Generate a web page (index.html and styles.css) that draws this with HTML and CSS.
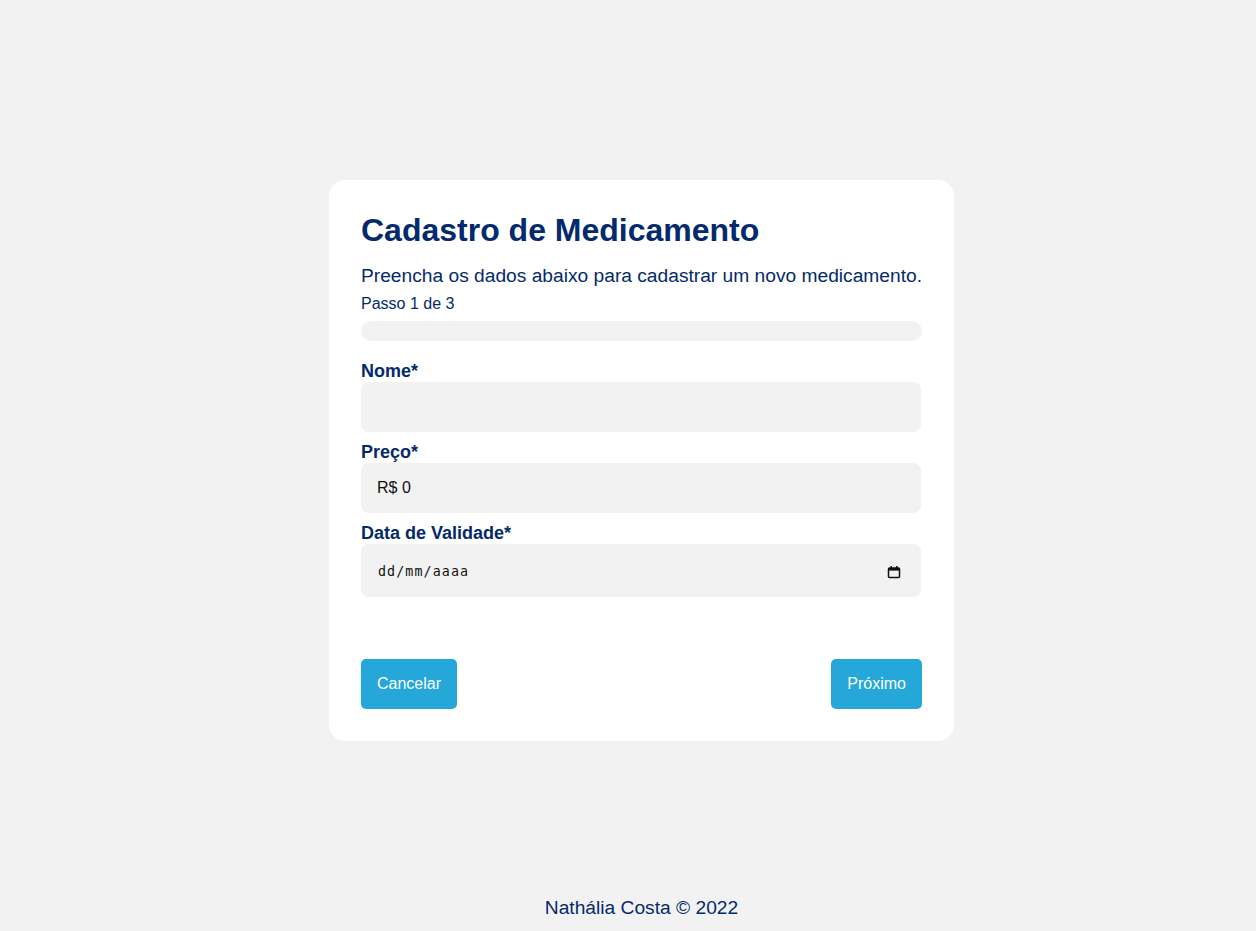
FILE: index.html
```html
<!DOCTYPE html>
<html lang="pt-BR">
<head>
<meta charset="utf-8">
<title>Cadastro de Medicamento</title>
<link rel="stylesheet" href="styles.css">
</head>
<body>
<main class="page">
  <section class="card">
    <h1 class="title">Cadastro de Medicamento</h1>
    <p class="subtitle">Preencha os dados abaixo para cadastrar um novo medicamento.</p>
    <p class="step">Passo 1 de 3</p>
    <div class="progress"><div class="progress-fill" style="width:0%"></div></div>
    <form class="form">
      <label class="label" for="nome">Nome*</label>
      <input class="field" id="nome" type="text">
      <label class="label" for="preco">Preço*</label>
      <input class="field" id="preco" type="text" value="R$ 0">
      <label class="label">Data de Validade*</label>
      <div class="field date-field">
        <span class="date-text">dd/mm/aaaa</span>
        <svg class="cal" width="14" height="14" viewBox="0 0 14 14" aria-hidden="true">
          <rect x="1.5" y="3" width="11" height="9.5" rx="1" fill="none" stroke="#111" stroke-width="1.5"/>
          <rect x="1.5" y="3" width="11" height="2.6" fill="#111"/>
          <rect x="3.5" y="1" width="1.5" height="3" fill="#111"/>
          <rect x="9" y="1" width="1.5" height="3" fill="#111"/>
        </svg>
      </div>
      <div class="actions">
        <button type="button" class="btn">Cancelar</button>
        <button type="button" class="btn">Próximo</button>
      </div>
    </form>
  </section>
</main>
<footer class="footer">Nathália Costa © 2022</footer>
</body>
</html>
```
FILE: styles.css
```css
* { box-sizing: border-box; }
html, body { margin: 0; padding: 0; }
body {
  background: #f2f2f2;
  font-family: "Liberation Sans", Arial, sans-serif;
  color: #042a6b;
  min-height: 100vh;
  display: flex;
  flex-direction: column;
  padding-left: 27px;
}
.page {
  flex: 1;
  display: flex;
  justify-content: center;
  align-items: flex-start;
  padding-top: 180px;
}
.card {
  width: 625px;
  background: #fff;
  border-radius: 16px;
  padding: 32px;
}
.title {
  margin: 0;
  font-size: 32px;
  font-weight: 700;
  line-height: 37px;
  color: #032a6d;
}
.subtitle {
  margin: 16px 0 0;
  font-size: 19.2px;
  line-height: 22px;
  white-space: nowrap;
}
.step {
  margin: 7px 0 0;
  font-size: 16px;
  line-height: 19px;
}
.progress {
  margin-top: 8px;
  height: 20px;
  border-radius: 10px;
  background: #f2f2f2;
  overflow: hidden;
}
.progress-fill { height: 100%; background: #26a7da; }
.form {
  display: flex;
  flex-direction: column;
  margin-top: 20px;
}
.label {
  font-size: 18px;
  font-weight: 700;
  line-height: 21px;
}
.field {
  width: 560px;
  height: 50px;
  border: none;
  border-radius: 8px;
  background: #f2f2f2;
  padding: 0 16px;
  font-family: "Liberation Sans", Arial, sans-serif;
  font-size: 16px;
  color: #111;
  margin-bottom: 10px;
  outline: none;
}
.date-field {
  height: 53px;
  display: flex;
  align-items: center;
  justify-content: space-between;
  padding: 2px 20px 0 17px;
}
.date-text {
  font-family: "DejaVu Sans Mono", "Liberation Mono", monospace;
  font-size: 13.33px;
  letter-spacing: 1.1px;
  color: #111;
}
.cal { display: block; }
.actions {
  display: flex;
  justify-content: space-between;
  margin-top: 52px;
}
.btn {
  height: 50px;
  padding: 0 16px;
  border: none;
  border-radius: 5px;
  background: #26a7da;
  color: #fff;
  font-family: "Liberation Sans", Arial, sans-serif;
  font-size: 16px;
  cursor: pointer;
}
.footer {
  height: 48px;
  display: flex;
  align-items: center;
  justify-content: center;
  font-size: 19.2px;
  padding-top: 2px;
}
```
